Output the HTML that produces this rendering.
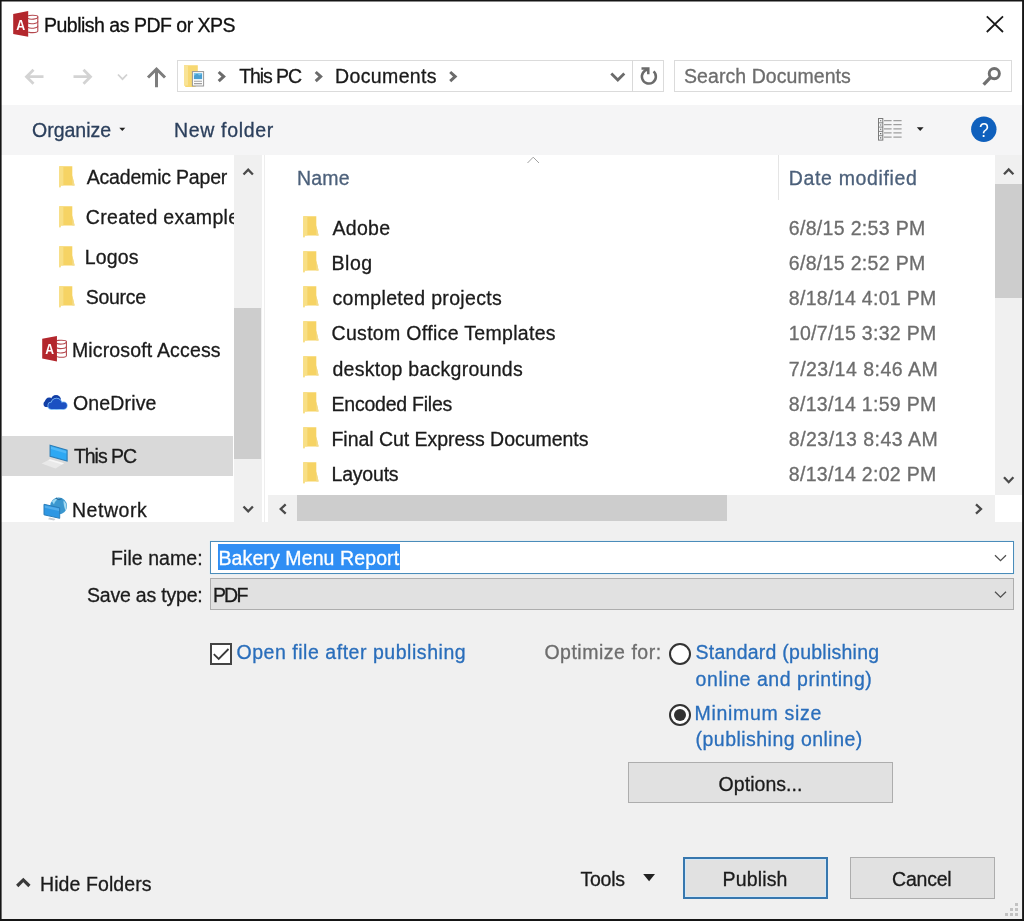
<!DOCTYPE html>
<html lang="en"><head><meta charset="utf-8"><title>Publish as PDF or XPS</title>
<style>
html,body{margin:0;padding:0;background:#f0f0f0;}
body{width:1024px;height:921px;position:relative;overflow:hidden;font-family:"Liberation Sans",Arial,sans-serif;}
.a{position:absolute;box-sizing:border-box;}
.t{position:absolute;white-space:nowrap;-webkit-text-stroke:0.3px;line-height:20px;font-family:"Liberation Sans",Arial,sans-serif;}
.ic{position:absolute;overflow:visible;}
.ic text{will-change:transform}
#clipL{position:absolute;left:0;top:155px;width:234px;height:367px;overflow:hidden;}
</style></head><body>
<!-- window backgrounds -->
<div class="a" style="left:0;top:0;width:1024px;height:105px;background:#fff"></div>
<div class="a" style="left:0;top:105px;width:1024px;height:50px;background:#f5f5f6"></div>
<div class="a" style="left:0;top:155px;width:1024px;height:367px;background:#fff"></div>
<div class="a" style="left:0;top:522px;width:1024px;height:399px;background:#f0f0f0"></div>

<!-- nav address bar + search -->
<div class="a" style="left:177px;top:60px;width:487px;height:32px;border:1px solid #dbdbdb;background:#fff"></div>
<div class="a" style="left:632px;top:60px;width:1px;height:32px;background:#d9d9d9"></div>
<div class="a" style="left:674px;top:60px;width:338px;height:32px;border:1px solid #dbdbdb;background:#fff"></div>

<!-- left pane selected row -->
<div class="a" style="left:2px;top:436px;width:231px;height:40px;background:#d9d9d9"></div>
<!-- left scrollbar -->
<div class="a" style="left:234px;top:155px;width:28px;height:367px;background:#f0f0f0"></div><div class="a" style="left:264px;top:155px;width:1px;height:367px;background:#eeeeee"></div>
<div class="a" style="left:234px;top:307.5px;width:27px;height:151.5px;background:#cdcdcd"></div>
<!-- column header separator -->
<div class="a" style="left:778px;top:155px;width:1px;height:45px;background:#e5e5e5"></div>
<!-- right scrollbar -->
<div class="a" style="left:995px;top:155px;width:27px;height:340px;background:#f0f0f0"></div>
<div class="a" style="left:995px;top:184px;width:27px;height:114px;background:#cdcdcd"></div>
<!-- h scrollbar -->
<div class="a" style="left:268px;top:495px;width:727px;height:27px;background:#f0f0f0"></div>
<div class="a" style="left:297px;top:495px;width:430px;height:26px;background:#cdcdcd"></div>

<!-- file name input -->
<div class="a" style="left:210px;top:541px;width:804px;height:33px;border:1px solid #4a8cba;background:#fff;box-shadow:0 0 1px #bfe3f5"></div>
<div class="a" style="left:217.6px;top:543.6px;width:182.7px;height:26.2px;background:#2f8ef4"></div>
<!-- save as type combo -->
<div class="a" style="left:210px;top:578px;width:804px;height:32px;border:1px solid #adadad;background:#e1e1e1"></div>
<!-- checkbox -->
<div class="a" style="left:210px;top:643px;width:22px;height:22px;border:2px solid #454545;background:#fff"></div>
<!-- radios -->
<div class="a" style="left:669px;top:643px;width:22.2px;height:22.2px;border:2.1px solid #333;background:#fff;border-radius:50%"></div>
<div class="a" style="left:669px;top:703.6px;width:22.2px;height:22.2px;border:2.1px solid #333;background:#fff;border-radius:50%"></div>
<div class="a" style="left:673.9px;top:708.5px;width:12.4px;height:12.4px;background:#333;border-radius:50%"></div>
<!-- buttons -->
<div class="a" style="left:628px;top:762px;width:265px;height:41px;border:1px solid #adadad;background:#e1e1e1"></div>
<div class="a" style="left:683px;top:857px;width:145px;height:41.5px;border:2px solid #3777ae;background:#e1e1e1;box-shadow:inset 0 0 0 1px #d3e8f8"></div>
<div class="a" style="left:850px;top:857px;width:145px;height:41.5px;border:1px solid #adadad;background:#e1e1e1"></div>

<svg class="ic" style="left:13.1px;top:11.2px" width="25.8" height="25.8" viewBox="0 0 26 26"><g fill="none" stroke="#b4474d" stroke-width="1.1"><path d="M15 5.2C15 3.9 25 3.9 25 5.6V20.2C25 22.2 15 22.2 15 20.8"/><path d="M15 7.4C17 8.9 25 8.6 25 5.9M15 12C17 13.5 25 13.2 25 10.4M15 16.5C17 18 25 17.7 25 14.9"/></g><path d="M0.2 2.9L15.3 0V26L0.2 23.1Z" fill="#b3272d"/><text transform="translate(7.7 18.9) scale(0.86 1)" font-family="Liberation Sans,Arial,sans-serif" font-weight="bold" font-size="14.5" fill="#fff" text-anchor="middle">A</text></svg>
<svg class="ic" style="left:42.4px;top:336.4px" width="25.4" height="25.4" viewBox="0 0 26 26"><g fill="none" stroke="#b4474d" stroke-width="1.1"><path d="M15 5.2C15 3.9 25 3.9 25 5.6V20.2C25 22.2 15 22.2 15 20.8"/><path d="M15 7.4C17 8.9 25 8.6 25 5.9M15 12C17 13.5 25 13.2 25 10.4M15 16.5C17 18 25 17.7 25 14.9"/></g><path d="M0.2 2.9L15.3 0V26L0.2 23.1Z" fill="#b3272d"/><text transform="translate(7.7 18.9) scale(0.86 1)" font-family="Liberation Sans,Arial,sans-serif" font-weight="bold" font-size="14.5" fill="#fff" text-anchor="middle">A</text></svg>
<!-- address folder + doc -->
<svg class="ic" style="left:184px;top:64.5px" width="21" height="23" viewBox="0 0 21 23"><path d="M0 0.3H13.8V20L11 22H1.2V20.5H0Z" fill="#f7d872"/><path d="M0 0.3H4V20.5H0Z" fill="#f9e395"/><rect x="8.4" y="6.6" width="11.2" height="14.4" fill="#fdfdfd" stroke="#969696" stroke-width="1"/><rect x="9.8" y="8" width="8.4" height="6.2" fill="#7cc6ea"/><path d="M10 11C12 8.5 14 8.5 15 10.5L18 9V14H10Z" fill="#4a9fd2"/><path d="M10 16.3H18M10 18.6H18" stroke="#a0a0a0" stroke-width="1.1"/></svg>
<!-- view icon -->
<svg class="ic" style="left:877.6px;top:117.8px" width="24" height="23" viewBox="0 0 24 23"><rect x="0.5" y="0.5" width="4.3" height="21.6" fill="#f5f6f7" stroke="#7a7a7a" stroke-width="1"/><path d="M0.5 4.8H4.8M0.5 9.1H4.8M0.5 13.4H4.8M0.5 17.7H4.8" stroke="#7a7a7a" stroke-width="0.9"/><path d="M2.1 2.7H3.3M2.1 7H3.3M2.1 11.3H3.3M2.1 15.6H3.3M2.1 19.9H3.3" stroke="#555" stroke-width="1.1"/><path d="M6 2.6H13.6M15.4 2.6H23.6M6 6.7H13.6M15.4 6.7H23.6M6 10.8H13.6M15.4 10.8H23.6M6 14.9H13.6M15.4 14.9H23.6M6 19.2H13.6M15.4 19.2H23.6" stroke="#9e9e9e" stroke-width="1.3"/></svg>
<!-- OneDrive -->
<svg class="ic" style="left:43px;top:394px" width="25" height="16" viewBox="0 0 25 16"><g fill="#123fa6"><circle cx="13" cy="6" r="5"/><circle cx="6.2" cy="8" r="4.4"/><circle cx="3.6" cy="10" r="3.1"/><rect x="3.6" y="8" width="13" height="5.1"/></g><g fill="#7fbdf6" stroke="#7fbdf6" stroke-width="1.6"><circle cx="13.5" cy="9.7" r="5.2"/><circle cx="8.5" cy="11.8" r="3.2"/><circle cx="20.5" cy="11.6" r="3.4"/><rect x="8.5" y="9.5" width="12" height="5.5"/></g><g fill="#1b50c2"><circle cx="13.5" cy="9.7" r="5.2"/><circle cx="8.5" cy="11.8" r="3.2"/><circle cx="20.5" cy="11.6" r="3.4"/><rect x="8.5" y="9.5" width="12" height="5.5"/></g></svg>
<!-- This PC -->
<svg class="ic" style="left:41px;top:444px" width="27" height="26" viewBox="0 0 27 26"><path d="M9 15.2L23 19.3L14.5 24.4L0.6 19.6Z" fill="#e9e9e9"/><path d="M9 15.2L23 19.3L21 20.5L7.2 16.3Z" fill="#f6f6f6"/><path d="M9.1 1.2L26.1 6.2V17L9.1 12.3Z" fill="#2da8f3" stroke="#2c7db6" stroke-width="1.1"/><path d="M10 2.5L25.2 7V9.5L10 5Z" fill="#4fb8f7"/></svg>
<!-- Network -->
<svg class="ic" style="left:43px;top:496px" width="26" height="26" viewBox="0 0 26 26"><circle cx="15.6" cy="10" r="8.4" fill="#3a97cf"/><path d="M9 5.5C11 3 14 2 16 2.2C13 4 11.5 6 11 8.5Z" fill="#9ad8f2"/><path d="M20.5 4.5C23.5 7 24.5 11 22.5 14.5C21 11 20.5 8 20.5 4.5Z" fill="#a6dcf3"/><path d="M13 2C15 4 16.5 4 18.5 2.8" fill="none" stroke="#2a6f9f" stroke-width="1.2"/><path d="M6.5 21.6L12.5 23L11 24.6L5 23.2Z" fill="#c9cdd2"/><path d="M1 8.3L16.7 11.8V22.3L1 18.8Z" fill="#2e97e3" stroke="#2a7db9" stroke-width="1"/><path d="M1.8 9.5L16 12.6V15L1.8 11.8Z" fill="#52adeb"/></svg>

<svg class="ic" style="left:59.0px;top:165.8px" width="17" height="23" viewBox="0 0 17 23"><path d="M0.3 0.3H13.3V9.5L15.6 19.6H1.6V21.3H0.3Z" fill="#f6d364"/><path d="M0.3 0.3H4.4V19.6H1.6V21.3H0.3Z" fill="#f8df85"/><path d="M13.3 9.5L15.6 19.6H13.3Z" fill="#f3dc8c"/></svg><svg class="ic" style="left:59.0px;top:205.8px" width="17" height="23" viewBox="0 0 17 23"><path d="M0.3 0.3H13.3V9.5L15.6 19.6H1.6V21.3H0.3Z" fill="#f6d364"/><path d="M0.3 0.3H4.4V19.6H1.6V21.3H0.3Z" fill="#f8df85"/><path d="M13.3 9.5L15.6 19.6H13.3Z" fill="#f3dc8c"/></svg><svg class="ic" style="left:59.0px;top:245.8px" width="17" height="23" viewBox="0 0 17 23"><path d="M0.3 0.3H13.3V9.5L15.6 19.6H1.6V21.3H0.3Z" fill="#f6d364"/><path d="M0.3 0.3H4.4V19.6H1.6V21.3H0.3Z" fill="#f8df85"/><path d="M13.3 9.5L15.6 19.6H13.3Z" fill="#f3dc8c"/></svg><svg class="ic" style="left:59.0px;top:285.8px" width="17" height="23" viewBox="0 0 17 23"><path d="M0.3 0.3H13.3V9.5L15.6 19.6H1.6V21.3H0.3Z" fill="#f6d364"/><path d="M0.3 0.3H4.4V19.6H1.6V21.3H0.3Z" fill="#f8df85"/><path d="M13.3 9.5L15.6 19.6H13.3Z" fill="#f3dc8c"/></svg><svg class="ic" style="left:303.0px;top:216.1px" width="17" height="23" viewBox="0 0 17 23"><path d="M0.3 0.3H13.3V9.5L15.6 19.6H1.6V21.3H0.3Z" fill="#f6d364"/><path d="M0.3 0.3H4.4V19.6H1.6V21.3H0.3Z" fill="#f8df85"/><path d="M13.3 9.5L15.6 19.6H13.3Z" fill="#f3dc8c"/></svg><svg class="ic" style="left:303.0px;top:251.2px" width="17" height="23" viewBox="0 0 17 23"><path d="M0.3 0.3H13.3V9.5L15.6 19.6H1.6V21.3H0.3Z" fill="#f6d364"/><path d="M0.3 0.3H4.4V19.6H1.6V21.3H0.3Z" fill="#f8df85"/><path d="M13.3 9.5L15.6 19.6H13.3Z" fill="#f3dc8c"/></svg><svg class="ic" style="left:303.0px;top:286.3px" width="17" height="23" viewBox="0 0 17 23"><path d="M0.3 0.3H13.3V9.5L15.6 19.6H1.6V21.3H0.3Z" fill="#f6d364"/><path d="M0.3 0.3H4.4V19.6H1.6V21.3H0.3Z" fill="#f8df85"/><path d="M13.3 9.5L15.6 19.6H13.3Z" fill="#f3dc8c"/></svg><svg class="ic" style="left:303.0px;top:321.3px" width="17" height="23" viewBox="0 0 17 23"><path d="M0.3 0.3H13.3V9.5L15.6 19.6H1.6V21.3H0.3Z" fill="#f6d364"/><path d="M0.3 0.3H4.4V19.6H1.6V21.3H0.3Z" fill="#f8df85"/><path d="M13.3 9.5L15.6 19.6H13.3Z" fill="#f3dc8c"/></svg><svg class="ic" style="left:303.0px;top:356.4px" width="17" height="23" viewBox="0 0 17 23"><path d="M0.3 0.3H13.3V9.5L15.6 19.6H1.6V21.3H0.3Z" fill="#f6d364"/><path d="M0.3 0.3H4.4V19.6H1.6V21.3H0.3Z" fill="#f8df85"/><path d="M13.3 9.5L15.6 19.6H13.3Z" fill="#f3dc8c"/></svg><svg class="ic" style="left:303.0px;top:391.5px" width="17" height="23" viewBox="0 0 17 23"><path d="M0.3 0.3H13.3V9.5L15.6 19.6H1.6V21.3H0.3Z" fill="#f6d364"/><path d="M0.3 0.3H4.4V19.6H1.6V21.3H0.3Z" fill="#f8df85"/><path d="M13.3 9.5L15.6 19.6H13.3Z" fill="#f3dc8c"/></svg><svg class="ic" style="left:303.0px;top:426.6px" width="17" height="23" viewBox="0 0 17 23"><path d="M0.3 0.3H13.3V9.5L15.6 19.6H1.6V21.3H0.3Z" fill="#f6d364"/><path d="M0.3 0.3H4.4V19.6H1.6V21.3H0.3Z" fill="#f8df85"/><path d="M13.3 9.5L15.6 19.6H13.3Z" fill="#f3dc8c"/></svg><svg class="ic" style="left:303.0px;top:461.7px" width="17" height="23" viewBox="0 0 17 23"><path d="M0.3 0.3H13.3V9.5L15.6 19.6H1.6V21.3H0.3Z" fill="#f6d364"/><path d="M0.3 0.3H4.4V19.6H1.6V21.3H0.3Z" fill="#f8df85"/><path d="M13.3 9.5L15.6 19.6H13.3Z" fill="#f3dc8c"/></svg>
<svg class="ic" style="left:0;top:0" width="1024" height="921" viewBox="0 0 1024 921" fill="none">
<!-- close X -->
<path d="M986.8 16.3L1003 32M1003 16.3L986.8 32" stroke="#1a1a1a" stroke-width="1.8"/>
<!-- nav arrows -->
<path d="M43.5 76.7H26.5M33.5 69.7L26.5 76.7L33.5 83.7" stroke="#d3d3d3" stroke-width="2.8"/>
<path d="M73.5 76.7H90.5M83.5 69.7L90.5 76.7L83.5 83.7" stroke="#d3d3d3" stroke-width="2.8"/>
<path d="M118 74.5L122.5 79.2L127 74.5" stroke="#d2d2d2" stroke-width="1.8"/>
<path d="M156.5 87.3V69.5M148 77.5L156.5 69L165 77.5" stroke="#7d7d7d" stroke-width="3"/>
<!-- breadcrumb chevrons -->
<path d="M218.7 72L223.7 76.6L218.7 81.2" stroke="#6b6b6b" stroke-width="3"/>
<path d="M315.7 72L320.7 76.6L315.7 81.2" stroke="#6b6b6b" stroke-width="3"/>
<path d="M450.2 72L455.2 76.6L450.2 81.2" stroke="#6b6b6b" stroke-width="3"/>
<!-- address dropdown chevron -->
<path d="M611.3 73.4L617.8 79.9L624.3 73.4" stroke="#6b6b6b" stroke-width="2.8"/>
<!-- refresh -->
<path d="M653.6 71.4A7 7 0 1 1 648.3 69.6" stroke="#6b6b6b" stroke-width="2.5"/>
<path d="M641.5 68.6H648.3V74.2" stroke="#6b6b6b" stroke-width="2.5"/>
<!-- search magnifier -->
<circle cx="994.3" cy="73.6" r="5.1" stroke="#707070" stroke-width="2.9"/>
<path d="M990.6 77.4L983.6 84.6" stroke="#707070" stroke-width="3.4"/>
<!-- organize arrow -->
<path d="M119.3 127.8H125.3L122.3 131Z" fill="#222"/>
<!-- view dropdown arrow -->
<path d="M916.8 127.3H923.6L920.2 131Z" fill="#222"/>
<!-- help -->
<circle cx="983.8" cy="129.2" r="12.7" fill="#0f60bd"/>
<!-- scroll arrows -->
<path d="M243.5 174.5L248.2 169.6L252.9 174.5" stroke="#4a4a4a" stroke-width="2.3"/>
<path d="M243.5 506.5L248.2 511.4L252.9 506.5" stroke="#4a4a4a" stroke-width="2.3"/>
<path d="M1004 174.3L1008.7 169.4L1013.4 174.3" stroke="#4a4a4a" stroke-width="2.3"/>
<path d="M1004 477.3L1008.7 482.2L1013.4 477.3" stroke="#4a4a4a" stroke-width="2.3"/>
<path d="M285.7 504.3L280.7 509L285.7 513.7" stroke="#4a4a4a" stroke-width="2.3"/>
<path d="M976 504.3L981 509L976 513.7" stroke="#4a4a4a" stroke-width="2.3"/>
<!-- sort chevron -->
<path d="M527.5 163L533.2 157.2L539 163" stroke="#a0a0a0" stroke-width="1"/>
<!-- combo chevrons -->
<path d="M995 555.2L1000.5 560.6L1006 555.2" stroke="#505050" stroke-width="1.3"/>
<path d="M995 591.8L1000.5 597.2L1006 591.8" stroke="#505050" stroke-width="1.3"/>
<!-- checkbox tick -->
<path d="M213.8 654.1L218.7 658.9L228.5 649" stroke="#3a3a3a" stroke-width="1.8"/>
<!-- hide folders chevron -->
<path d="M17.2 886L23.3 879.9L29.4 886" stroke="#3a3a3a" stroke-width="3.2"/>
<!-- tools arrow -->
<path d="M643.2 874H655L649.1 881.2Z" fill="#222"/>
<!-- resize grip -->
<g fill="#c2c2c2"><rect x="1015" y="903" width="3" height="3"/><rect x="1010" y="908" width="3" height="3"/><rect x="1015" y="908" width="3" height="3"/><rect x="1005" y="913" width="3" height="3"/><rect x="1010" y="913" width="3" height="3"/><rect x="1015" y="913" width="3" height="3"/></g>
</svg>
<div id="txt" style="position:absolute;left:0;top:0;width:1024px;height:921px;will-change:transform">
<span class="t" id="t0" style="left:44.00px;top:15.00px;color:#111;font-size:19.5px;letter-spacing:-0.500px;">Publish as PDF or XPS</span>
<span class="t" id="t1" style="left:239.25px;top:66.00px;color:#1a1a1a;font-size:19.5px;letter-spacing:-1.083px;">This PC</span>
<span class="t" id="t2" style="left:335.00px;top:66.00px;color:#1a1a1a;font-size:19.5px;letter-spacing:0.375px;">Documents</span>
<span class="t" id="t3" style="left:684.00px;top:66.00px;color:#6d6d6d;font-size:19.5px;letter-spacing:0.067px;">Search Documents</span>
<span class="t" id="t4" style="left:32.00px;top:120.00px;color:#2b3f5c;font-size:19.5px;">Organize</span>
<span class="t" id="t5" style="left:174.00px;top:120.00px;color:#2b3f5c;font-size:19.5px;letter-spacing:0.667px;">New folder</span>
<span class="t" id="t6" style="left:86.75px;top:167.00px;color:#1b1b1b;font-size:19.5px;letter-spacing:-0.192px;">Academic Paper</span>
<span class="t" id="t7" style="left:85.75px;top:207.00px;color:#1b1b1b;font-size:19.5px;letter-spacing:0.350px;">Created examples</span>
<span class="t" id="t8" style="left:84.75px;top:247.00px;color:#1b1b1b;font-size:19.5px;letter-spacing:0.125px;">Logos</span>
<span class="t" id="t9" style="left:85.75px;top:287.00px;color:#1b1b1b;font-size:19.5px;letter-spacing:-0.300px;">Source</span>
<span class="t" id="t10" style="left:71.90px;top:340.00px;color:#1b1b1b;font-size:19.5px;letter-spacing:0.160px;">Microsoft Access</span>
<span class="t" id="t11" style="left:72.90px;top:393.00px;color:#1b1b1b;font-size:19.5px;letter-spacing:0.171px;">OneDrive</span>
<span class="t" id="t12" style="left:73.90px;top:446.00px;color:#1b1b1b;font-size:19.5px;letter-spacing:-1.033px;">This PC</span>
<span class="t" id="t13" style="left:71.90px;top:500.00px;color:#1b1b1b;font-size:19.5px;letter-spacing:0.567px;">Network</span>
<span class="t" id="t14" style="left:296.90px;top:168.00px;color:#4c607a;font-size:19.5px;letter-spacing:0.267px;">Name</span>
<span class="t" id="t15" style="left:788.80px;top:168.00px;color:#4c607a;font-size:19.5px;letter-spacing:0.650px;">Date modified</span>
<span class="t" id="t16" style="left:332.50px;top:218.00px;color:#1b1b1b;font-size:19.5px;letter-spacing:0.300px;">Adobe</span>
<span class="t" id="t17" style="left:788.80px;top:218.00px;color:#6d6d6d;font-size:19.5px;letter-spacing:0.323px;">6/8/15 2:53 PM</span>
<span class="t" id="t18" style="left:331.50px;top:253.00px;color:#1b1b1b;font-size:19.5px;letter-spacing:0.533px;">Blog</span>
<span class="t" id="t19" style="left:788.80px;top:253.00px;color:#6d6d6d;font-size:19.5px;letter-spacing:0.323px;">6/8/15 2:52 PM</span>
<span class="t" id="t20" style="left:332.50px;top:288.00px;color:#1b1b1b;font-size:19.5px;letter-spacing:0.329px;">completed projects</span>
<span class="t" id="t21" style="left:788.80px;top:288.00px;color:#6d6d6d;font-size:19.5px;letter-spacing:0.314px;">8/18/14 4:01 PM</span>
<span class="t" id="t22" style="left:331.50px;top:323.00px;color:#1b1b1b;font-size:19.5px;letter-spacing:0.318px;">Custom Office Templates</span>
<span class="t" id="t23" style="left:788.80px;top:323.00px;color:#6d6d6d;font-size:19.5px;letter-spacing:0.314px;">10/7/15 3:32 PM</span>
<span class="t" id="t24" style="left:332.50px;top:359.00px;color:#1b1b1b;font-size:19.5px;letter-spacing:0.267px;">desktop backgrounds</span>
<span class="t" id="t25" style="left:788.80px;top:359.00px;color:#6d6d6d;font-size:19.5px;letter-spacing:0.486px;">7/23/14 8:46 AM</span>
<span class="t" id="t26" style="left:331.50px;top:394.00px;color:#1b1b1b;font-size:19.5px;letter-spacing:-0.233px;">Encoded Files</span>
<span class="t" id="t27" style="left:788.80px;top:394.00px;color:#6d6d6d;font-size:19.5px;letter-spacing:0.314px;">8/13/14 1:59 PM</span>
<span class="t" id="t28" style="left:331.50px;top:429.00px;color:#1b1b1b;font-size:19.5px;letter-spacing:-0.038px;">Final Cut Express Documents</span>
<span class="t" id="t29" style="left:788.80px;top:429.00px;color:#6d6d6d;font-size:19.5px;letter-spacing:0.486px;">8/23/13 8:43 AM</span>
<span class="t" id="t30" style="left:331.50px;top:464.00px;color:#1b1b1b;font-size:19.5px;letter-spacing:-0.200px;">Layouts</span>
<span class="t" id="t31" style="left:788.80px;top:464.00px;color:#6d6d6d;font-size:19.5px;letter-spacing:0.314px;">8/13/14 2:02 PM</span>
<span class="t" id="t32" style="left:111.00px;top:548.00px;color:#1b1b1b;font-size:19.5px;letter-spacing:0.067px;">File name:</span>
<span class="t" id="t33" style="left:218.50px;top:548.00px;color:#fff;font-size:19.5px;letter-spacing:0.106px;">Bakery Menu Report</span>
<span class="t" id="t34" style="left:87.00px;top:585.00px;color:#1b1b1b;font-size:19.5px;letter-spacing:-0.200px;">Save as type:</span>
<span class="t" id="t35" style="left:212.90px;top:585.00px;color:#1b1b1b;font-size:19.5px;letter-spacing:-1.800px;">PDF</span>
<span class="t" id="t36" style="left:236.50px;top:642.00px;color:#2a6ebb;font-size:19.5px;letter-spacing:0.536px;">Open file after publishing</span>
<span class="t" id="t37" style="left:544.40px;top:642.00px;color:#6d6d6d;font-size:19.5px;letter-spacing:0.517px;">Optimize for:</span>
<span class="t" id="t38" style="left:695.60px;top:642.00px;color:#2a6ebb;font-size:19.5px;letter-spacing:0.242px;">Standard (publishing</span>
<span class="t" id="t39" style="left:695.60px;top:669.00px;color:#2a6ebb;font-size:19.5px;letter-spacing:0.547px;">online and printing)</span>
<span class="t" id="t40" style="left:694.60px;top:703.00px;color:#2a6ebb;font-size:19.5px;letter-spacing:0.691px;">Minimum size</span>
<span class="t" id="t41" style="left:695.60px;top:729.00px;color:#2a6ebb;font-size:19.5px;letter-spacing:0.467px;">(publishing online)</span>
<span class="t" id="t42" style="left:718.60px;top:774.00px;color:#1b1b1b;font-size:19.5px;letter-spacing:0.044px;">Options...</span>
<span class="t" id="t43" style="left:40.00px;top:874.00px;color:#1b1b1b;font-size:19.5px;letter-spacing:0.091px;">Hide Folders</span>
<span class="t" id="t44" style="left:580.50px;top:869.00px;color:#1b1b1b;font-size:19.5px;letter-spacing:-0.250px;">Tools</span>
<span class="t" id="t45" style="left:722.50px;top:869.00px;color:#1b1b1b;font-size:19.5px;letter-spacing:0.167px;">Publish</span>
<span class="t" id="t46" style="left:892.00px;top:869.00px;color:#1b1b1b;font-size:19.5px;letter-spacing:-0.200px;">Cancel</span>
</div>
<span class="q" style="position:absolute;left:978.2px;top:118.6px;color:#fff;font-size:21px;line-height:21px;transform:scaleX(.84);font-family:'Liberation Sans',Arial,sans-serif">?</span>
<div class="a" style="left:234px;top:200px;width:28px;height:40px;background:#f0f0f0"></div>
<!-- window border -->
<svg class="ic" style="left:0;top:0" width="1024" height="921" viewBox="0 0 1024 921"><path d="M0 0H1024V921H0ZM1.6 1.5V919.1H1022.1V1.5Z" fill="#151515" fill-rule="evenodd"/></svg>
</body></html>
